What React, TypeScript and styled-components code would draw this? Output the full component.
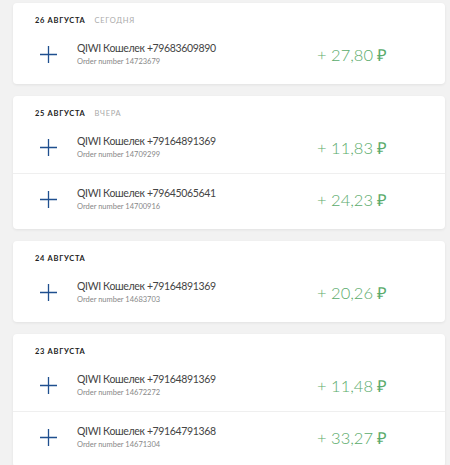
import styled, {createGlobalStyle} from 'styled-components'

interface IPayment {
  phone: string
  order: string
  amount: string
}

interface IDay {
  date: string
  label?: string
  items: IPayment[]
}

const days: IDay[] = [
  {
    date: '26 августа',
    label: 'сегодня',
    items: [{phone: '+79683609890', order: '14723679', amount: '27,80'}],
  },
  {
    date: '25 августа',
    label: 'вчера',
    items: [
      {phone: '+79164891369', order: '14709299', amount: '11,83'},
      {phone: '+79645065641', order: '14700916', amount: '24,23'},
    ],
  },
  {
    date: '24 августа',
    items: [{phone: '+79164891369', order: '14683703', amount: '20,26'}],
  },
  {
    date: '23 августа',
    items: [
      {phone: '+79164891369', order: '14672272', amount: '11,48'},
      {phone: '+79164791368', order: '14671304', amount: '33,27'},
    ],
  },
]

const GlobalStyle = createGlobalStyle`
  html, body {
    margin: 0;
    background: #f2f2f2;
  }
  body {
    font-family: Lato, "Open Sans", sans-serif;
    color: #333;
  }
`

/**
 * Plus sign drawn in front of every incoming payment
 */
function PlusIcon(): JSX.Element {
  return (
    <svg width="17" height="17" viewBox="0 0 17 17">
      <path d="M8.5 0V17M0 8.5H17" stroke="#1f4f8f" strokeWidth="1.3" fill="none" />
    </svg>
  )
}

export default function App(): JSX.Element {
  return (
    <>
      <GlobalStyle />
      <Feed>
        {days.map((day) => (
          <DayCard key={day.date}>
            <DayHeader>
              <DayDate>{day.date}</DayDate>
              {day.label && <DayLabel>{day.label}</DayLabel>}
            </DayHeader>
            {day.items.map((item) => (
              <PaymentRow key={item.order}>
                <PlusIcon />
                <PaymentInfo>
                  <PaymentTitle>QIWI Кошелек {item.phone}</PaymentTitle>
                  <PaymentOrder>Order number {item.order}</PaymentOrder>
                </PaymentInfo>
                <Amount>+ {item.amount} ₽</Amount>
              </PaymentRow>
            ))}
          </DayCard>
        ))}
      </Feed>
    </>
  )
}

// styles
const Feed = styled.div`
  display: flex;
  flex-direction: column;
  gap: 12px;
  padding: 3px 5px 20px 13px;
`

const DayCard = styled.section`
  background: #fff;
  border-radius: 4px;
  box-shadow: 0 1px 3px rgba(0, 0, 0, 0.07);
  padding-bottom: 4px;
`

const DayHeader = styled.div`
  display: flex;
  align-items: center;
  gap: 9px;
  height: 9px;
  padding: 13px 22px 4px;
  font-size: 7.5px;
  line-height: 9px;
  letter-spacing: 0.7px;
  text-transform: uppercase;
`

const DayDate = styled.span`
  font-weight: 700;
  color: #222;
`

const DayLabel = styled.span`
  color: #aaa;
`

const PaymentRow = styled.div`
  display: grid;
  grid-template-columns: 17px 1fr 128px;
  column-gap: 20px;
  align-items: center;
  height: 51px;
  padding-left: 27px;

  & + & {
    border-top: 1px solid #efefef;
  }
`

const PaymentInfo = styled.div`
  display: flex;
  flex-direction: column;
  margin-top: -2px;
`

const PaymentTitle = styled.div`
  font-size: 10.5px;
  line-height: 15px;
  letter-spacing: -0.35px;
  color: #444;
`

const PaymentOrder = styled.div`
  font-size: 7.5px;
  line-height: 11px;
  color: #888;
`

const Amount = styled.div`
  font-size: 16.5px;
  font-weight: 300;
  color: #5aab6b;
  white-space: nowrap;
`
